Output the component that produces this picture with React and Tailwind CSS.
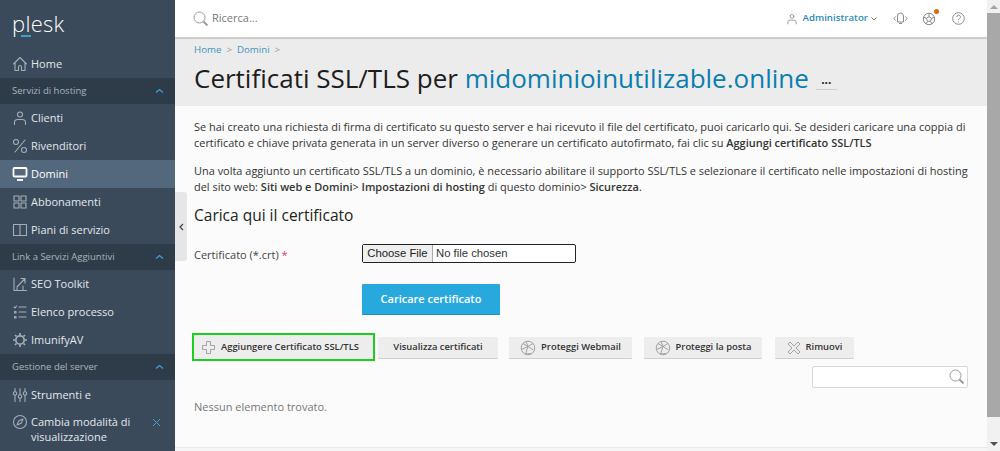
import React from "react";

const S = { fill: "none", stroke: "currentColor", strokeWidth: 1.1, strokeLinecap: "round", strokeLinejoin: "round" };

const Ico = {
  home: <svg width="16" height="16" viewBox="0 0 16 16" {...S}><path d="M1.500 8 8 1.500 14.500 8M3 7v7.500h3.500V11a1.500 1.500 0 0 1 3 0v3.500H13V7" /></svg>,
  user: <svg width="16" height="16" viewBox="0 0 16 16" {...S}><circle cx="8" cy="4.500" r="2.500" /><path d="M2.500 14.500v-2.500a3 3 0 0 1 3-2.500h5a3 3 0 0 1 3 2.500v2.500" /></svg>,
  percent: <svg width="16" height="16" viewBox="0 0 16 16" {...S}><circle cx="4" cy="4" r="2.500" /><circle cx="12" cy="12" r="2.500" /><path d="M13 2 3 14" /></svg>,
  monitor: <svg width="16" height="16" viewBox="0 0 16 16" fill="none" stroke="currentColor" strokeWidth="1.800"><rect x="1.500" y="2" width="13" height="8.500" rx="1" /><path d="M5 14h6" /></svg>,
  grid: <svg width="16" height="16" viewBox="0 0 16 16" {...S}><rect x="2" y="2" width="5" height="5" /><rect x="9" y="2" width="5" height="5" /><rect x="2" y="9" width="5" height="5" /><rect x="9" y="9" width="5" height="5" /></svg>,
  book: <svg width="16" height="16" viewBox="0 0 16 16" {...S}><path d="M1.500 2.500H8v11H1.500zM8 2.500h6.500v11H8z" /></svg>,
  chart: <svg width="16" height="16" viewBox="0 0 16 16" {...S}><path d="M2 2v12.500h12.500M5 11l8-8.500M9 2.500h4V7M5 14v-2M11 14v-4" /></svg>,
  list: <svg width="16" height="16" viewBox="0 0 16 16" {...S}><path d="M7 3h7M7 8h7M7 13h7M2 3l1 1 1.500-2M2.500 7.500h1.500v1.500H2.500zM2.500 12.500h1.500V14H2.500z" /></svg>,
  gear: <svg width="16" height="16" viewBox="0 0 16 16" fill="none" stroke="currentColor" strokeWidth="1.700"><circle cx="8" cy="8" r="4.200" /><path d="M8 1v2M8 13v2M1 8h2M13 8h2M3 3l1.500 1.500M11.500 11.500 13 13M3 13l1.500-1.500M11.500 4.500 13 3" /></svg>,
  sliders: <svg width="16" height="16" viewBox="0 0 16 16" {...S}><path d="M3 1.500v3M3 8.500v6M8 1.500v6M8 11.500v3M13 1.500v3M13 8.500v6" /><circle cx="3" cy="6.500" r="1.700" /><circle cx="8" cy="9.500" r="1.700" /><circle cx="13" cy="6.500" r="1.700" /></svg>,
  compass: <svg width="16" height="16" viewBox="0 0 16 16" {...S}><circle cx="8" cy="8" r="6.500" /><path d="M11 5 9.200 9.200 5 11l1.800-4.200z" /></svg>,
  globe: <svg width="16" height="16" viewBox="0 0 16 16" fill="none" stroke="currentColor" strokeWidth="1"><circle cx="8" cy="8" r="6.800" /><path d="M3 3.500 8 6.500l5-3M6 1.500 8 6.500 5.500 14M8 6.500l5.500 3.500M8 6.500 1.500 9.500M5.500 14l6-.5" /></svg>,
  search: <svg width="16" height="16" viewBox="0 0 16 16" fill="none" stroke="currentColor" strokeWidth="1"><circle cx="6.500" cy="6.500" r="5.500" /><path d="m10.500 10.500 4 4" strokeWidth="1.800" /></svg>,
  chev: <svg width="9" height="6" viewBox="0 0 9 6" fill="none" stroke="currentColor" strokeWidth="1.300"><path d="m1 4.500 3.500-3 3.500 3" /></svg>,
};

function Item({ icon, label, active }) {
  return (
    <div className={`flex h-[28px] items-center pl-[12px] ${active ? "bg-[#53687d] text-white" : "text-[#e3e7eb]"}`}>
      <span className={`mr-[3px] flex w-[16px] justify-center ${active ? "text-white" : "text-[#a3aeb9]"}`}>{icon}</span>
      <span className="pt-[1px] text-[11px]">{label}</span>
    </div>
  );
}

function Group({ label }) {
  return (
    <div className="flex h-[26px] items-center justify-between bg-[#2e3c4a] pl-[12px] pr-[11px] text-[#a9b4be]">
      <span className="text-[9.500px]">{label}</span>
      <span className="text-[#3aa3cf]">{Ico.chev}</span>
    </div>
  );
}

function Tool({ icon, label, w }) {
  return (
    <button className={`mt-[1px] flex h-[22px] items-center justify-center gap-[5px] rounded-[1px] border-b border-[#cfcfcf] bg-[#ededed] pt-[1px] text-[9.400px] font-semibold text-[#333] ${w}`}>
      {icon && <span className="text-[#a3a3a3]">{icon}</span>}
      {label}
    </button>
  );
}

export default function App() {
  return (
    <div className="flex h-[451px] w-[1000px] overflow-hidden bg-[#fbfbfb] font-['Open_Sans',sans-serif]">
      <aside className="flex w-[175px] shrink-0 flex-col overflow-hidden bg-[#3a4a5b]">
        <div className="flex h-[50px] shrink-0 pl-[12px] pt-[9px]">
          <div className="relative h-[28px] text-[22px] leading-[28px] tracking-[0.3px] text-white font-light">
            plesk
            <span className="absolute left-[9px] top-[26px] h-[2px] w-[10px] bg-[#3aa3cf]" />
          </div>
        </div>
        <Item icon={Ico.home} label="Home" />
        <Group label="Servizi di hosting" />
        <Item icon={Ico.user} label="Clienti" />
        <Item icon={Ico.percent} label="Rivenditori" />
        <Item icon={Ico.monitor} label="Domini" active />
        <Item icon={Ico.grid} label="Abbonamenti" />
        <Item icon={Ico.book} label="Piani di servizio" />
        <Group label="Link a Servizi Aggiuntivi" />
        <Item icon={Ico.chart} label="SEO Toolkit" />
        <Item icon={Ico.list} label="Elenco processo" />
        <Item icon={Ico.gear} label="ImunifyAV" />
        <Group label="Gestione del server" />
        <div className="flex h-[27px] shrink-0 overflow-hidden pl-[12px] pt-[7px] text-[#e3e7eb]">
          <span className="mr-[3px] w-[16px] text-[#a3aeb9]">{Ico.sliders}</span>
          <span className="w-[110px] text-[11px] leading-[16px]">Strumenti e<br />impostazioni</span>
        </div>
        <div className="flex pl-[12px] pt-[7px] text-[#e3e7eb]">
          <span className="mr-[3px] w-[16px] text-[#a3aeb9]">{Ico.compass}</span>
          <span className="w-[118px] text-[11px] leading-[15px]">Cambia modalità di visualizzazione</span>
          <svg className="mt-[4px] ml-[3px] text-[#3aa3cf]" width="9" height="9" viewBox="0 0 9 9" fill="none" stroke="currentColor" strokeWidth="1"><path d="m1 1 7 7M8 1 1 8" /></svg>
        </div>
      </aside>

      <main className="relative flex min-w-0 flex-1 flex-col">
        <header className="flex h-[39px] shrink-0 items-center border-b-2 border-[#cccccc] bg-white pl-[18px] pr-[22px]">
          <span className="text-[#9a9a9a]">{Ico.search}</span>
          <span className="ml-[3px] text-[11px] text-[#777]">Ricerca...</span>
          <div className="ml-auto flex items-center">
            <span className="text-[#8a8a8a] [&>svg]:h-[12px] [&>svg]:w-[12px]">{Ico.user}</span>
            <span className="ml-[4px] text-[9.700px] font-semibold text-[#2b8bb8]">Administrator</span>
            <svg className="ml-[3px] mr-[16px] text-[#777]" width="6" height="4" viewBox="0 0 6 4" fill="none" stroke="currentColor"><path d="m.5.500 2.500 2.500L5.500.500" /></svg>
            <svg className="mr-[14px] text-[#8a8a8a]" width="15" height="15" viewBox="0 0 15 15" fill="none" stroke="currentColor"><path d="M4.500 11V5a3 3 0 0 1 6 0v6zM6 12.500h3M2.500 5.500 1 7.500l1.500 2M12.500 5.500l1.500 2-1.500 2" /></svg>
            <span className="relative mr-[16px] text-[#8a8a8a]">
              <svg className="block" width="14" height="14" viewBox="0 0 14 14" fill="none" stroke="currentColor"><circle cx="7" cy="7" r="5.700" /><path d="M7 4.500 4.500 6.300l1 3h3l1-3zM7 4.500V1.500M4.500 6.300 1.700 5.200M9.500 6.300l2.800-1.100M5.500 9.300 4 12M8.500 9.300 10 12" /></svg>
              <span className="absolute right-[-3px] top-[-3px] h-[5px] w-[5px] rounded-full bg-[#d96b12]" />
            </span>
            <svg className="text-[#8a8a8a]" width="13" height="13" viewBox="0 0 13 13" fill="none" stroke="currentColor"><circle cx="6.500" cy="6.500" r="5.800" /><path d="M4.800 5a1.800 1.800 0 1 1 2.700 1.500c-.7.4-1 .8-1 1.500M6.500 9.500v.8" /></svg>
          </div>
        </header>

        <section className="h-[67px] shrink-0 bg-[#ececec] pl-[19px] pt-[4px]">
          <div className="flex items-center gap-[5px] text-[9.700px] leading-[14px] text-[#3f93bd]">
            <span>Home</span>
            <span className="text-[#999]">&gt;</span>
            <span>Domini</span>
            <span className="text-[#999]">&gt;</span>
          </div>
          <div className="mt-[5px] flex items-center">
            <h1 className="text-[26px] leading-[32px] font-medium whitespace-nowrap text-[#1d1d1d]">
              Certificati SSL/TLS per <span className="text-[#0a7eb0]">midominioinutilizable.online</span>
            </h1>
            <span className="ml-[7px] mt-[4px] flex h-[19px] w-[21px] items-center justify-center border-b border-[#cfcfcf] text-[12px] leading-[10px] font-bold text-[#222]">...</span>
          </div>
        </section>

        <section className="min-h-0 flex-1 pl-[19px] pr-[10px] pt-[13px]">
          <p className="text-[10.960px] leading-[16px] text-[#333]">
            Se hai creato una richiesta di firma di certificato su questo server e hai ricevuto il file del certificato, puoi caricarlo qui. Se desideri caricare una coppia di certificato e chiave privata generata in un server diverso o generare un certificato autofirmato, fai clic su <b className="font-semibold">Aggiungi certificato SSL/TLS</b>
          </p>
          <p className="mt-[12px] text-[10.960px] leading-[16px] text-[#333]">
            Una volta aggiunto un certificato SSL/TLS a un dominio, è necessario abilitare il supporto SSL/TLS e selezionare il certificato nelle impostazioni di hosting del sito web: <b className="font-semibold">Siti web e Domini</b>&gt; <b className="font-semibold">Impostazioni di hosting</b> di questo dominio&gt; <b className="font-semibold">Sicurezza</b>.
          </p>
          <h2 className="mt-[9px] text-[15.500px] leading-[22px] font-medium text-[#222]">Carica qui il certificato</h2>
          <div className="mt-[18px] flex items-start">
            <label className="w-[168px] pt-[3px] text-[11px] leading-[16px] text-[#444]">Certificato (*.crt) <span className="text-[#d9435c]">*</span></label>
            <div className="flex h-[19px] w-[214px] items-center rounded-[2px] border border-[#222] bg-white font-['Liberation_Sans',sans-serif] text-[11.300px] text-[#333]">
              <span className="flex h-full w-[70px] items-center justify-center border-r border-[#aaa] bg-[#efefef] text-[#222]">Choose File</span>
              <span className="ml-[3px]">No file chosen</span>
            </div>
          </div>
          <button className="ml-[168px] mt-[21px] flex h-[31px] w-[138px] items-center justify-center rounded-[1px] border-b border-[#1e8fc0] bg-[#28a9de] text-[11px] font-semibold text-white">Caricare certificato</button>

          <div className="-ml-[2px] mt-[18px] flex items-center">
            <div className="mr-[3px] flex h-[28px] w-[183px] items-center justify-center border-[2px] border-[#1fcf1f]">
              <div className="flex h-full w-full items-center gap-[6px] bg-[#ededed] pl-[8px] pt-[1px] text-[9.400px] font-semibold text-[#333]">
                <svg className="text-[#a3a3a3]" width="13" height="13" viewBox="0 0 13 13" fill="none" stroke="currentColor"><path d="M4.500.500h4v4h4v4h-4v4h-4v-4h-4v-4h4z" /></svg>
                Aggiungere Certificato SSL/TLS
              </div>
            </div>
            <Tool label="Visualizza certificati" w="w-[120px]" />
            <span className="ml-[11px]"><Tool icon={Ico.globe} label="Proteggi Webmail" w="w-[123px]" /></span>
            <span className="ml-[12px]"><Tool icon={Ico.globe} label="Proteggi la posta" w="w-[118px]" /></span>
            <span className="ml-[13px]"><Tool icon={<svg className="block" width="14" height="14" viewBox="0 0 14 14" fill="none" stroke="currentColor"><path d="M1 3 3 1l4 4 4-4 2 2-4 4 4 4-2 2-4-4-4 4-2-2 4-4z" /></svg>} label="Rimuovi" w="w-[79px]" /></span>
          </div>
          <div className="mt-[5px] flex justify-end pr-[9px]">
            <div className="flex h-[22px] w-[156px] items-center justify-end rounded-[2px] border border-[#d8d8d8] bg-white pr-[2px] text-[#999]">{Ico.search}</div>
          </div>
          <p className="mt-[11px] text-[11px] leading-[16px] text-[#777]">Nessun elemento trovato.</p>
        </section>

        <div className="absolute bottom-0 left-0 right-0 h-[4px] border-t border-[#e8e8e8] bg-[#f6f6f6]" />
        <div className="absolute left-0 top-[192px] flex h-[69px] w-[12px] items-center justify-center rounded-r-[3px] bg-[#e6e6e6] text-[#444]">
          <svg width="5" height="8" viewBox="0 0 5 8" fill="none" stroke="currentColor" strokeWidth="1.200"><path d="M4 1 1 4l3 3" /></svg>
        </div>
      </main>

      <div className="flex w-[13px] shrink-0 flex-col items-center bg-[#f1f1f1]">
        <div className="flex h-[13px] items-center justify-center">
          <span className="h-0 w-0 border-x-[4px] border-b-[4px] border-x-transparent border-b-[#a3a3a3]" />
        </div>
        <div className="h-[404px] w-full bg-[#a8a8a8]" />
        <div className="mt-auto flex h-[14px] items-center justify-center">
          <span className="h-0 w-0 border-x-[4px] border-t-[4px] border-x-transparent border-t-[#505050]" />
        </div>
      </div>
    </div>
  );
}
